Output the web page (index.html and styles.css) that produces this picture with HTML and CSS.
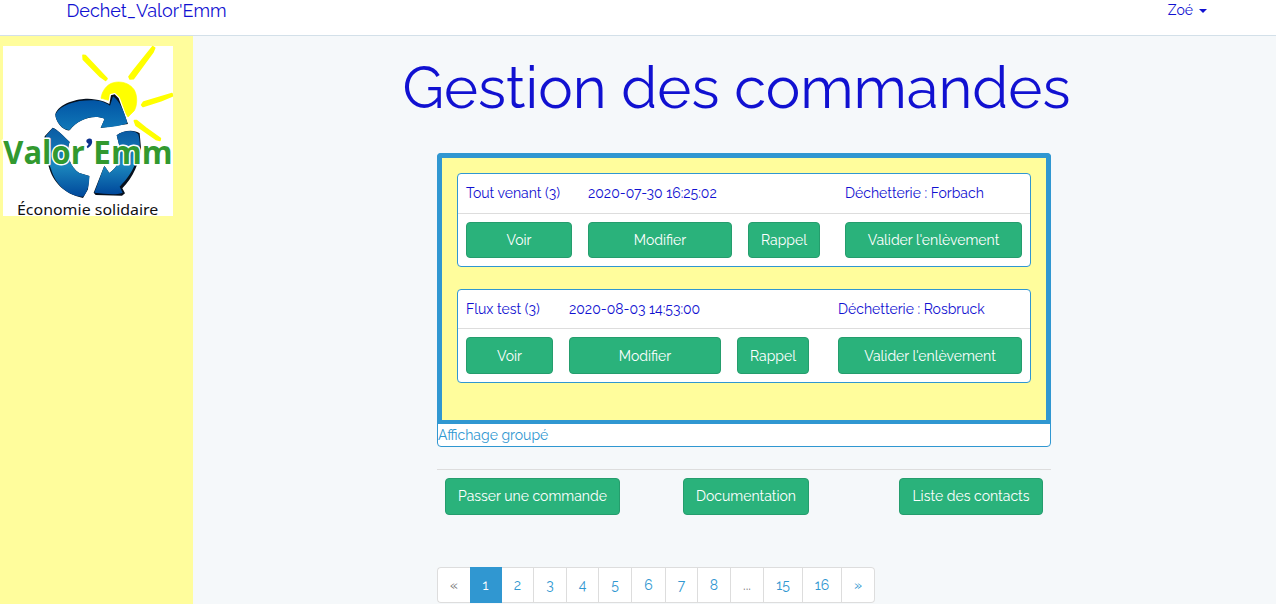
FILE: index.html
```html
<!DOCTYPE html>
<html lang="fr">
<head>
<meta charset="utf-8">
<title>Dechet_Valor'Emm</title>
<link rel="stylesheet" href="styles.css">
</head>
<body>
<nav class="navbar">
  <a class="brand">Dechet_Valor'Emm</a>
  <a class="user"><span>Zoé</span><span class="caret"></span></a>
</nav>
<div class="layout">
  <aside class="sidebar">
    <svg class="logo" viewBox="9 30 510 510" role="img" aria-label="Valor'Emm, Économie solidaire">
      <defs>
        <linearGradient id="top" x1="0" y1="0" x2="0" y2="1"><stop offset="0" stop-color="#0050a2"/><stop offset="1" stop-color="#1078b8"/></linearGradient>
        <linearGradient id="low" x1="0" y1="0" x2="0" y2="1"><stop offset="0" stop-color="#0a5ba4"/><stop offset=".55" stop-color="#1b86bd"/><stop offset="1" stop-color="#00489b"/></linearGradient>
      </defs>
      <rect x="9" y="30" width="510" height="510" fill="#fff"/>
      <g fill="#ff0" stroke="#ff0" stroke-linejoin="round">
        <path stroke-width="5" d="M249 58L256 59L321 128L317 133L301 122L250 70Z"/>
        <path stroke-width="5" d="M458 32L464 36L459 48L400 128L390 129L387 122L402 102Z"/>
        <path stroke-width="5" d="M425 207L431 198L516 173L517 180L483 194L429 211Z"/>
        <path stroke-width="5" d="M403 254L410 254L437 276L481 307L480 313L468 310L408 268Z"/>
        <path stroke-width="2" d="M303 187C306 165 320 145 340 140C364 134 390 142 403 162C413 181 412 207 403 224L384 243L366 218L341 180L332 186L326 193Z"/>
      </g>
      <g fill="#06101d" stroke="#fff" stroke-width="8" paint-order="stroke" stroke-linejoin="round">
        <path d="M166 235C175 201 235 188 263 188C295 189 319 198 328 204L333 178L344 175L356 187L384 264L302 276L314 248C279 235 235 249 209 283C190 286 166 258 166 235Z"/>
        <path d="M158 275L134 301C130 325 134 362 146 391C158 436 190 474 249 486L264 460L268 420L238 411C210 393 196 351 209 318C190 300 172 280 158 275Z"/>
        <path d="M350 298C369 282 404 280 419 292L423 337C420 375 399 426 367 457L375 472L366 479L287 477L281 470L313 389L328 411C350 398 364 372 359 334Z"/>
      </g>
      <path fill="url(#top)" d="M166 235C184 202 242 189 294 194C311 196 323 204 330 209L339 181C356 192 373 224 382 262C354 272 331 274 302 275L314 248C279 235 235 249 209 282C190 285 167 258 166 235Z"/>
      <path fill="url(#low)" d="M158 276C172 280 190 300 209 318C196 351 210 393 238 411L268 420C268 447 263 469 249 482C202 480 166 445 153 399C139 361 133 326 138 299Z"/>
      <path fill="url(#low)" d="M350 298C369 282 404 280 415 295C424 328 419 356 405 385C395 410 381 430 359 452L368 470C342 479 315 472 283 470L313 389L328 411C350 398 364 372 359 334Z"/>
      <g class="wordmark">
        <text x="10" y="383" textLength="244" lengthAdjust="spacingAndGlyphs">Valor</text>
        <text x="280" y="383" textLength="238" lengthAdjust="spacingAndGlyphs">Emm</text>
      </g>
      <path fill="#0c328d" stroke="#fff" stroke-width="5" paint-order="stroke" d="M260 311Q269 305 275 310Q281 326 263 337L260 332L266 324Q256 318 260 311Z"/>
      <text class="tagline" x="51" y="537" textLength="424" lengthAdjust="spacingAndGlyphs">Économie solidaire</text>
    </svg>
  </aside>
  <main class="main">
    <h1 class="title">Gestion des commandes</h1>
    <div class="content">
      <section class="orders">
        <div class="orders-list">
          <article class="order order-first">
            <div class="order-row order-head"><span>Tout venant (3)</span><span>2020-07-30 16:25:02</span><span class="place">Déchetterie : Forbach</span></div>
            <div class="order-row order-actions"><a class="btn">Voir</a><a class="btn">Modifier</a><a class="btn">Rappel</a><a class="btn validate">Valider l'enlèvement</a></div>
          </article>
          <article class="order order-second">
            <div class="order-row order-head"><span>Flux test (3)</span><span>2020-08-03 14:53:00</span><span class="place">Déchetterie : Rosbruck</span></div>
            <div class="order-row order-actions"><a class="btn">Voir</a><a class="btn">Modifier</a><a class="btn">Rappel</a><a class="btn validate">Valider l'enlèvement</a></div>
          </article>
        </div>
        <a class="grouped">Affichage groupé</a>
      </section>
      <div class="links">
        <a class="btn link-order">Passer une commande</a>
        <a class="btn link-doc">Documentation</a>
        <a class="btn link-contacts">Liste des contacts</a>
      </div>
      <div class="pagination">
        <span class="muted">«</span><span class="active">1</span><a>2</a><a>3</a><a>4</a><a>5</a><a>6</a><a>7</a><a>8</a><span class="muted">...</span><a>15</a><a>16</a><a>»</a>
      </div>
    </div>
  </main>
</div>
</body>
</html>
```
FILE: styles.css
```css
* { box-sizing: border-box; }
body {
  margin: 0;
  height: 604px;
  overflow: hidden;
  background: #f5f8fa;
  color: #1111d1;
  font: 400 14px/22px Raleway, Lato, sans-serif;
}
.navbar {
  display: flex;
  justify-content: space-between;
  height: 36px;
  padding: 0 69px 0 66.5px;
  background: #fff;
  border-bottom: 1px solid #d3e0e9;
}
.brand { font-size: 18px; line-height: 21px; }
.user { display: flex; align-items: center; gap: 6px; height: 20px; }
.caret { border: 4px solid transparent; border-top-color: #1111d1; border-bottom: 0; margin-top: 2px; }
.layout { display: flex; height: 568px; }
.sidebar { width: 193px; padding: 10px 0 0 3px; background: #fffd9c; }
.logo { display: block; width: 170px; height: 170px; overflow: visible; }
.wordmark { font: 700 98px "Open Sans", sans-serif; fill: #32992f; stroke: #fff; stroke-width: 9px; paint-order: stroke; stroke-linejoin: round; }
.tagline { font: 400 43px "Noto Sans", sans-serif; fill: #111; }
.main { flex: 1; }
.title {
  margin: 0;
  padding: 17px 0 0 209.5px;
  height: 117px;
  font-size: 58px;
  line-height: 70px;
  font-weight: 400;
  white-space: nowrap;
}
.content { width: 614px; margin-left: 244px; }
.orders { height: 294px; background: #fff; border: 1px solid #3097d1; border-radius: 4px; }
.orders-list {
  display: flex;
  flex-direction: column;
  gap: 22px;
  height: 271px;
  margin: -1px -1px 0;
  padding: 15px;
  background: #fffd9c;
  border: 5px solid #3097d1;
  border-bottom-width: 4px;
  border-radius: 4px 4px 0 0;
}
.order { height: 94px; background: #fff; border: 1px solid #3097d1; border-radius: 4px; }
.order-row { display: grid; padding: 8px; }
.order-first .order-row { grid-template-columns: 122px 160px 97px 177px; }
.order-second .order-row { grid-template-columns: 103px 168px 101px 184px; }
.order-head { height: 40px; border-bottom: 1px solid #ddd; white-space: nowrap; }
.order-second .order-head { height: 39px; }
.place { grid-column: 4; }
.order-actions .btn { margin-right: 16px; }
.order-actions .btn:nth-child(3) { width: 72px; }
.order-actions .validate { margin-right: 0; }
.btn {
  display: block;
  height: 36px;
  border: 1px solid #259d6d;
  border-radius: 4px;
  background: #2ab27b;
  color: #fff;
  line-height: 34px;
  text-align: center;
  white-space: nowrap;
}
.order-second .btn { height: 37px; line-height: 36px; }
.links .btn { height: 37px; line-height: 35px; }
.grouped { display: block; color: #3097d1; line-height: 22px; }
.links { display: flex; justify-content: space-between; margin-top: 22px; padding: 8px; border-top: 1px solid #ddd; }
.link-order { width: 175px; }
.link-doc { width: 126px; margin-left: -17px; margin-right: 10px; }
.link-contacts { width: 144px; }
.pagination {
  display: grid;
  grid-template-columns: 33px 32px 32px 33px 32px 33px 34px 32px 33px 33px 39px 39px 33px;
  width: 438px;
  height: 36px;
  margin-top: 44px;
  background: #fff;
  border-radius: 4px;
  color: #3097d1;
}
.pagination > * {
  border: 1px solid #ddd;
  border-left-width: 0;
  line-height: 34px;
  text-align: center;
}
.pagination > :first-child { border-left-width: 1px; border-right: 0; border-radius: 4px 0 0 4px; }
.pagination > :last-child { border-radius: 0 4px 4px 0; }
.pagination .muted { color: #777; }
.pagination .active { background: #3097d1; border-color: #3097d1; color: #fff; }
```
